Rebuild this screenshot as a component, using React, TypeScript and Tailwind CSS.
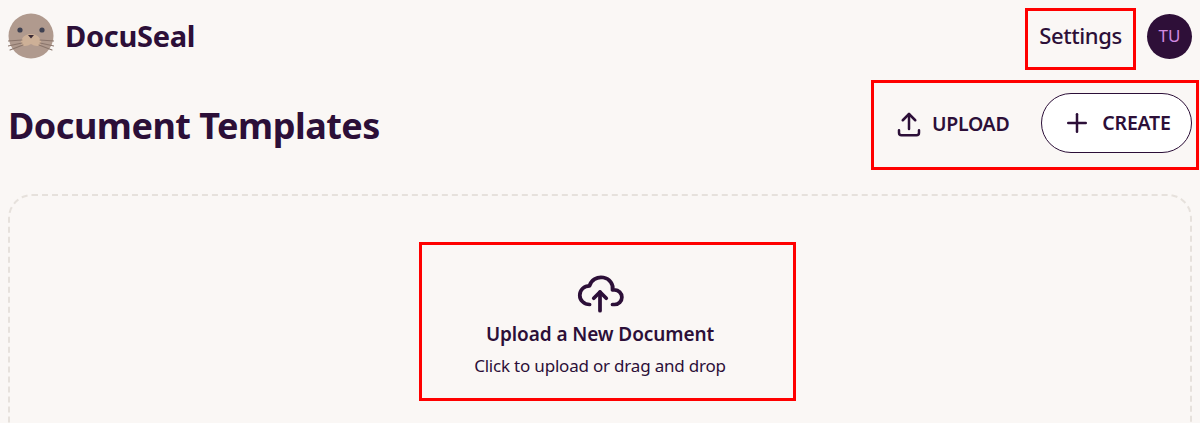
import { TbCloudUpload, TbPlus, TbUpload } from "react-icons/tb";

function SealLogo() {
  return (
    <svg viewBox="0 0 46 46" className="w-[46px] h-[46px]">
      <circle cx="23" cy="23" r="22.5" fill="#b09a8e" />
      <path d="M23 21c-5 0-8 2-10 7-1 3 1 5 4 5 2 0 4-1 6-2 2 1 4 2 6 2 3 0 5-2 4-5-2-5-5-7-10-7z" fill="#cdb097" />
      <circle cx="12" cy="17" r="2.6" fill="#3f4151" />
      <circle cx="34" cy="17" r="2.6" fill="#3f4151" />
      <path d="M20 22h6l-3 3.5z" fill="#3a2a35" />
      <g stroke="#8a756b" strokeWidth="1.1" strokeLinecap="round">
        <path d="M14 27L0 28" />
        <path d="M14 30L0 33" />
        <path d="M15 32L2 37" />
        <path d="M32 27L46 28" />
        <path d="M32 30L46 33" />
        <path d="M31 32L44 37" />
      </g>
    </svg>
  );
}

export default function App() {
  return (
    <div className="relative h-[423px] overflow-hidden bg-[#faf7f5] px-2 text-[#2c0f38] font-['Noto_Sans','Open_Sans',sans-serif]">
      <header className="flex h-[72px] items-center justify-between">
        <div className="flex items-center gap-[11px]">
          <SealLogo />
          <span className="text-[29px] font-bold tracking-[-0.3px]">DocuSeal</span>
        </div>
        <div className="flex items-center gap-[11px]">
          <div className="border-[3px] border-[#ff0000] w-[111px] h-[62px] mt-[6px] pb-[8px] flex items-center justify-center">
            <span className="text-[22px] font-medium tracking-[-0.4px]">Settings</span>
          </div>
          <div className="w-[45px] h-[45px] rounded-full bg-[#2e0f38] text-[#d08ae0] flex items-center justify-center text-[17px]">
            TU
          </div>
        </div>
      </header>

      <div className="flex items-center justify-between h-[90px] mt-2">
        <h1 className="text-[36px] font-bold tracking-[-0.5px] mt-[2px]">Document Templates</h1>
        <div className="-mr-[7px] flex items-center h-[90px] w-[328px] border-[3px] border-[#ff0000] pl-[20px] pb-[4px]">
          <div className="flex items-center gap-[8px] w-[147px] pt-[1px]">
            <TbUpload className="w-[30px] h-[30px]" />
            <span className="text-[19.5px] font-semibold tracking-[-0.3px]">UPLOAD</span>
          </div>
          <div className="w-[151px] h-[60px] rounded-full border border-[#2c0f38] bg-white flex items-center justify-center gap-[10px]">
            <TbPlus className="w-[30px] h-[30px]" />
            <span className="text-[19.5px] font-semibold tracking-[-0.2px]">CREATE</span>
          </div>
        </div>
      </div>

      <div className="mt-6 h-[300px] rounded-[24px] border-2 border-dashed border-[#e6e1dc] flex justify-center pt-[46px]">
        <div className="ml-[15px] pr-[15px] w-[377px] h-[159px] border-[3px] border-[#ff0000] flex flex-col items-center pt-[22px]">
          <TbCloudUpload className="w-[50px] h-[50px] shrink-0" strokeWidth={1.8} />
          <div className="text-[19px] font-semibold tracking-[-0.1px] leading-[26px] mt-[4px]">Upload a New Document</div>
          <div className="text-[17px] tracking-[-0.2px] leading-[24px] mt-[7px]">Click to upload or drag and drop</div>
        </div>
      </div>
    </div>
  );
}
